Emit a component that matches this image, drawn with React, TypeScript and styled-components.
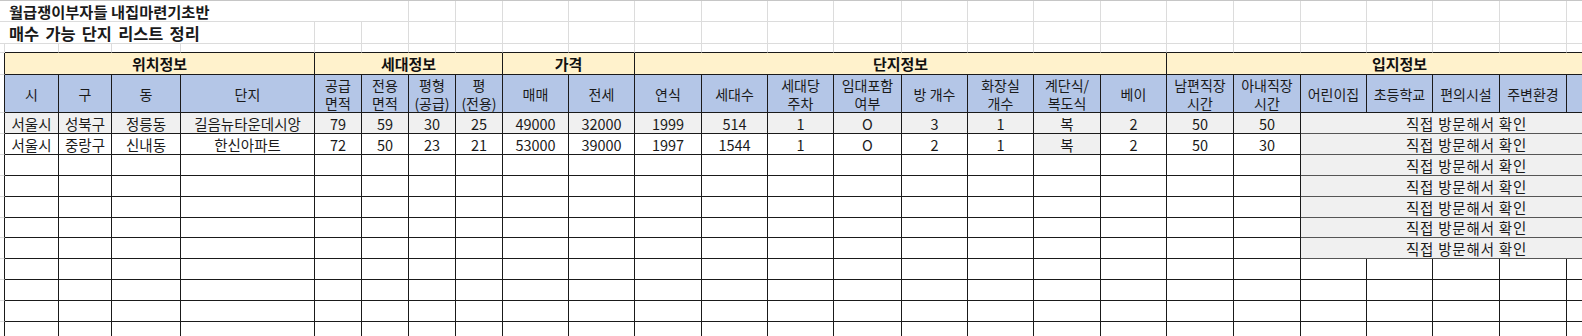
import styled, { createGlobalStyle } from "styled-components";

const GlobalStyle = createGlobalStyle`
  html, body {
    margin: 0;
    padding: 0;
    background: #fff;
    overflow: hidden;
  }
  body {
    font-family: "Noto Sans CJK KR", "Noto Sans", sans-serif;
    color: #111;
  }
`;

const colWidths = [
  5, 54, 53, 69, 134, 47, 47, 47, 47, 66, 66, 67, 66, 66, 68, 66, 66, 67, 66,
  67, 67, 66, 66, 67, 67, 66
];

const groups = [
  { title: "위치정보", span: 4 },
  { title: "세대정보", span: 4 },
  { title: "가격", span: 2 },
  { title: "단지정보", span: 8 },
  { title: "입지정보", span: 7 }
];

const headers = [
  ["시"], ["구"], ["동"], ["단지"],
  ["공급", "면적"], ["전용", "면적"], ["평형", "(공급)"], ["평", "(전용)"],
  ["매매"], ["전세"],
  ["연식"], ["세대수"], ["세대당", "주차"], ["임대포함", "여부"], ["방 개수"],
  ["화장실", "개수"], ["계단식/", "복도식"], ["베이"],
  ["남편직장", "시간"], ["아내직장", "시간"],
  ["어린이집"], ["초등학교"], ["편의시설"], ["주변환경"], [""]
];

type Row = { values: string[]; shaded: number[]; note: boolean };

const rows: Row[] = [
  {
    values: ["서울시", "성북구", "정릉동", "길음뉴타운데시앙", "79", "59", "30", "25", "49000", "32000", "1999", "514", "1", "O", "3", "1", "복", "2", "50", "50"],
    shaded: Array.from({ length: 20 }, (_, i) => i),
    note: true
  },
  {
    values: ["서울시", "중랑구", "신내동", "한신아파트", "72", "50", "23", "21", "53000", "39000", "1997", "1544", "1", "O", "2", "1", "복", "2", "50", "30"],
    shaded: [16],
    note: true
  },
  ...Array.from({ length: 5 }, () => ({ values: Array(20).fill(""), shaded: [], note: true })),
  ...Array.from({ length: 4 }, () => ({ values: Array(20).fill(""), shaded: [], note: false }))
];

const dataRowHeights = [21, 21, 21, 21, 21, 20, 21, 21, 21, 21, 21];

export default function App() {
  return (
    <>
      <GlobalStyle />
      <Sheet
        style={{
          gridTemplateColumns: colWidths.map((w) => `${w}px`).join(" "),
          gridTemplateRows: [21, 22, 9, 22, 38, ...dataRowHeights]
            .map((h) => `${h}px`)
            .join(" ")
        }}
      >
        <TitleCell $span={7} $size={15.3} $wordGap={0}>
          월급쟁이부자들 내집마련기초반
        </TitleCell>
        {Array.from({ length: 19 }, (_, i) => (
          <GridCell key={`r1-${i}`} />
        ))}

        <TitleCell $span={5} $size={16.4} $wordGap={2.5}>
          매수 가능 단지 리스트 정리
        </TitleCell>
        {Array.from({ length: 21 }, (_, i) => (
          <GridCell key={`r2-${i}`} />
        ))}

        <GridCell />
        {Array.from({ length: 25 }, (_, i) => (
          <GridCell key={`r3-${i}`} $topOfTable />
        ))}

        <Gutter />
        {groups.map((g) => (
          <GroupHeader key={g.title} $span={g.span}>
            {g.title}
          </GroupHeader>
        ))}

        <Gutter />
        {headers.map((lines, i) => (
          <SubHeader key={i}>
            {lines.map((line, j) => (
              <span key={j}>{line}</span>
            ))}
          </SubHeader>
        ))}

        {rows.map((row, r) => [
          <Gutter key={`g-${r}`} />,
          ...row.values.map((v, c) => (
            <DataCell key={`d-${r}-${c}`} $shaded={row.shaded.includes(c)}>
              {v}
            </DataCell>
          )),
          ...(row.note
            ? [<NoteCell key={`n-${r}`}>직접 방문해서 확인</NoteCell>]
            : Array.from({ length: 5 }, (_, i) => (
                <DataCell key={`e-${r}-${i}`} $shaded={false} />
              )))
        ])}
      </Sheet>
    </>
  );
}

const Sheet = styled.div`
  display: grid;
  width: 1633px;
  border-top: 1px solid #c6c6c6;
  box-sizing: border-box;
`;

const GridCell = styled.div<{ $topOfTable?: boolean }>`
  box-sizing: border-box;
  border-right: 1px solid #dcdcdc;
  border-bottom: 1px solid ${(p) => (p.$topOfTable ? "#1a1a1a" : "#dcdcdc")};
`;

const TitleCell = styled.div<{ $span: number; $size: number; $wordGap: number }>`
  grid-column: span ${(p) => p.$span};
  box-sizing: border-box;
  border-right: 1px solid #dcdcdc;
  border-bottom: 1px solid #dcdcdc;
  padding-left: 9px;
  display: flex;
  align-items: center;
  font-size: ${(p) => p.$size}px;
  font-weight: 700;
  word-spacing: ${(p) => p.$wordGap}px;
  color: #1a1a1a;
  white-space: nowrap;
`;

const Gutter = styled.div`
  box-sizing: border-box;
  border-right: 1px solid #1a1a1a;
  border-bottom: 1px solid #dcdcdc;
`;

const GroupHeader = styled.div<{ $span: number }>`
  grid-column: span ${(p) => p.$span};
  box-sizing: border-box;
  background: #fff2cc;
  border-right: 1px solid #1a1a1a;
  border-bottom: 1px solid #1a1a1a;
  display: flex;
  align-items: center;
  justify-content: center;
  font-size: 15px;
  font-weight: 700;
  color: #111;
`;

const SubHeader = styled.div`
  box-sizing: border-box;
  background: #b4c6e7;
  border-right: 1px solid #1a1a1a;
  border-bottom: 1px solid #1a1a1a;
  display: flex;
  flex-direction: column;
  align-items: center;
  justify-content: center;
  font-size: 14px;
  line-height: 18px;
  color: #1a1a1a;
  white-space: nowrap;
`;

const DataCell = styled.div<{ $shaded: boolean }>`
  box-sizing: border-box;
  background: ${(p) => (p.$shaded ? "#f0f0f0" : "#fff")};
  border-right: 1px solid #1a1a1a;
  border-bottom: 1px solid #1a1a1a;
  display: flex;
  align-items: center;
  justify-content: center;
  font-size: 14.5px;
  color: #1a1a1a;
  white-space: nowrap;
`;

const NoteCell = styled.div`
  grid-column: span 5;
  box-sizing: border-box;
  background: #f0f0f0;
  border-right: 1px solid #1a1a1a;
  border-bottom: 1px solid #555;
  display: flex;
  align-items: center;
  justify-content: center;
  font-size: 14.5px;
  color: #1a1a1a;
  white-space: nowrap;
  letter-spacing: 0.8px;
`;
